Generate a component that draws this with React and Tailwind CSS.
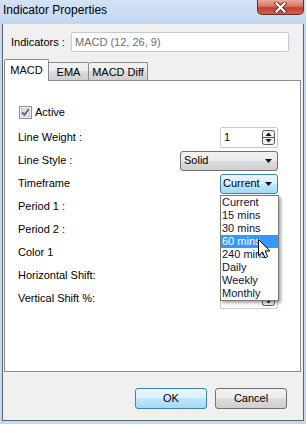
const btnGray = 'bg-[linear-gradient(to_bottom,#f2f2f2_0%,#ebebeb_50%,#dddddd_50%,#cfcfcf_100%)] border border-[#707070]'
const btnBlue = 'bg-[linear-gradient(to_bottom,#eaf6fd_0%,#d9f0fc_50%,#bee6fd_50%,#a7d9f5_100%)] border border-[#3c7fb1]'

function CloseButton() {
  return (
    <div className="mr-[2px] w-[47px] h-[15px] flex items-center justify-center rounded-b-[5px] border border-t-0 border-[#6a2e26] bg-[linear-gradient(to_bottom,#e9a99a_0%,#d87563_45%,#c4412f_55%,#d0614f_100%)]">
      <svg width="13" height="11" viewBox="0 0 13 11">
        <path d="M2.5 1.5 L10.5 9.5 M10.5 1.5 L2.5 9.5" stroke="#6b2a22" strokeWidth="4" strokeLinecap="square" />
        <path d="M2.5 1.5 L10.5 9.5 M10.5 1.5 L2.5 9.5" stroke="#ffffff" strokeWidth="2.2" strokeLinecap="square" />
      </svg>
    </div>
  )
}

function Checkbox() {
  return (
    <svg width="13" height="13" viewBox="0 0 13 13">
      <rect x="0.5" y="0.5" width="12" height="12" fill="#f4f4f4" stroke="#8e8f8f" />
      <rect x="2.5" y="2.5" width="8" height="8" fill="#dfe3ea" stroke="#c9ccd2" />
      <path d="M3.2 6.4 L5.4 8.8 L9.8 3.2" fill="none" stroke="#4a5d94" strokeWidth="1.7" />
    </svg>
  )
}

function Spinner() {
  return (
    <svg width="13" height="15" viewBox="0 0 13 15">
      <rect x="0.5" y="0.5" width="12" height="14" rx="2" fill="#eeeeee" stroke="#5a5a5a" />
      <line x1="1" y1="7.5" x2="12" y2="7.5" stroke="#5a5a5a" />
      <path d="M3.5 6 L9.5 6 L6.5 2.5 Z" fill="#111" />
      <path d="M3.5 9 L9.5 9 L6.5 12.5 Z" fill="#111" />
    </svg>
  )
}

function Arrow() {
  return (
    <svg width="7" height="4" viewBox="0 0 7 4">
      <path d="M0 0 L7 0 L3.5 4 Z" fill="#111" />
    </svg>
  )
}

function SpinBox({ value }) {
  return (
    <div className="w-[58px] h-[21px] flex items-center justify-between pl-[3px] pr-[2px] bg-white border border-[#c9cdd2] rounded-[2px]">
      <span>{value}</span>
      <Spinner />
    </div>
  )
}

const frames = ['Current', '15 mins', '30 mins', '60 mins', '240 mins', 'Daily', 'Weekly', 'Monthly']

export default function App() {
  return (
    <div className="relative w-[306px] h-[424px] overflow-hidden bg-[#c4d8ee] font-['Liberation_Sans',Arial,sans-serif] text-[11px] text-black">
      <div className="h-[24px] flex items-start justify-between bg-[linear-gradient(to_bottom,#d3e3f5,#c2d7ef)]">
        <span className="pl-[3px] pt-[3px] text-[12px] leading-[14px]">Indicator Properties</span>
        <CloseButton />
      </div>

      <div className="ml-[2px] w-[302px] h-[397px] flex flex-col bg-[#f0f0f0] border-x border-b border-[#5e6368]">
        <div className="mt-[8px] h-[20px] flex items-center">
          <span className="w-[68px] pl-[8px]">Indicators :</span>
          <div className="w-[218px] h-[20px] flex items-center pl-[3px] bg-white border border-[#c5c8cd] rounded-[2px] text-[#6d6d6d]">
            MACD (12, 26, 9)
          </div>
        </div>

        <div className="mt-[7px] ml-[1px] h-[22px] flex items-end relative z-10">
          <div className="w-[45px] h-[22px] flex items-center justify-center pb-[1px] bg-white border border-b-0 border-[#898c95] rounded-t-[2px]">MACD</div>
          <div className="w-[40px] h-[18px] mb-[1px] flex items-center justify-center pt-[1px] border-t border-r border-[#898c95] rounded-tr-[2px] bg-[linear-gradient(to_bottom,#f3f3f3_0%,#ebebeb_50%,#dddddd_50%,#cfcfcf_100%)]">EMA</div>
          <div className="w-[59px] h-[18px] mb-[1px] flex items-center justify-center pt-[1px] border-t border-r border-[#898c95] rounded-t-[2px] bg-[linear-gradient(to_bottom,#f3f3f3_0%,#ebebeb_50%,#dddddd_50%,#cfcfcf_100%)]">MACD Diff</div>
        </div>

        <div className="-mt-[1px] ml-[1px] w-[297px] h-[292px] bg-white border border-[#898c95] pt-[21px]">
          <div className="h-[20px] flex items-center gap-[3px] pl-[14px]">
            <Checkbox />
            <span>Active</span>
          </div>

          <div className="mt-[4px] flex flex-col">
            <div className="h-[23px] flex items-center justify-between pl-[13px] pr-[22px]">
              <span>Line Weight :</span>
              <SpinBox value="1" />
            </div>
            <div className="h-[23px] flex items-center justify-between pl-[13px] pr-[22px]">
              <span>Line Style :</span>
              <div className={`w-[98px] h-[20px] flex items-center justify-between pl-[3px] pr-[5px] rounded-[3px] ${btnGray}`}>
                <span>Solid</span>
                <Arrow />
              </div>
            </div>
            <div className="h-[23px] flex items-center justify-between pl-[13px] pr-[22px]">
              <span>Timeframe</span>
              <div className="relative z-20">
                <div className={`w-[58px] h-[20px] flex items-center justify-between pl-[2px] pr-[5px] rounded-[3px] ${btnBlue}`}>
                  <span>Current</span>
                  <Arrow />
                </div>
                <div className="absolute left-0 top-[21px] w-[59px] flex flex-col bg-white border border-[#7a7a7a] shadow-[2px_2px_3px_rgba(0,0,0,0.35)]">
                  {frames.map((f) => (
                    <div
                      key={f}
                      className={`h-[13px] leading-[13px] pl-[1px] whitespace-nowrap overflow-hidden ${f === '60 mins' ? 'bg-[#3399ff] text-white' : 'text-[#101030]'}`}
                    >
                      {f}
                    </div>
                  ))}
                </div>
              </div>
            </div>
            <div className="h-[23px] flex items-center pl-[13px] pr-[22px]">
              <span>Period 1 :</span>
            </div>
            <div className="h-[23px] flex items-center pl-[13px] pr-[22px]">
              <span>Period 2 :</span>
            </div>
            <div className="h-[23px] flex items-center pl-[13px] pr-[22px]">
              <span>Color 1</span>
            </div>
            <div className="h-[23px] flex items-center pl-[13px] pr-[22px]">
              <span>Horizontal Shift:</span>
            </div>
            <div className="h-[23px] flex items-center justify-between pl-[13px] pr-[22px]">
              <span>Vertical Shift %:</span>
              <SpinBox value="" />
            </div>
          </div>
        </div>

        <div className="mt-[16px] flex justify-end gap-[8px] pr-[16px]">
          <button className={`w-[72px] h-[21px] rounded-[3px] ${btnBlue}`}>OK</button>
          <button className={`w-[72px] h-[21px] rounded-[3px] ${btnGray}`}>Cancel</button>
        </div>
      </div>

      <svg className="absolute left-[258px] top-[239px] z-30" width="13" height="20" viewBox="0 0 13 20">
        <path d="M0.5 0.5 L0.5 16.5 L4.5 12.8 L7 18.8 L9.6 17.7 L7.2 11.9 L12 11.9 Z" fill="#ffffff" stroke="#000000" strokeLinejoin="round" />
      </svg>
    </div>
  )
}
